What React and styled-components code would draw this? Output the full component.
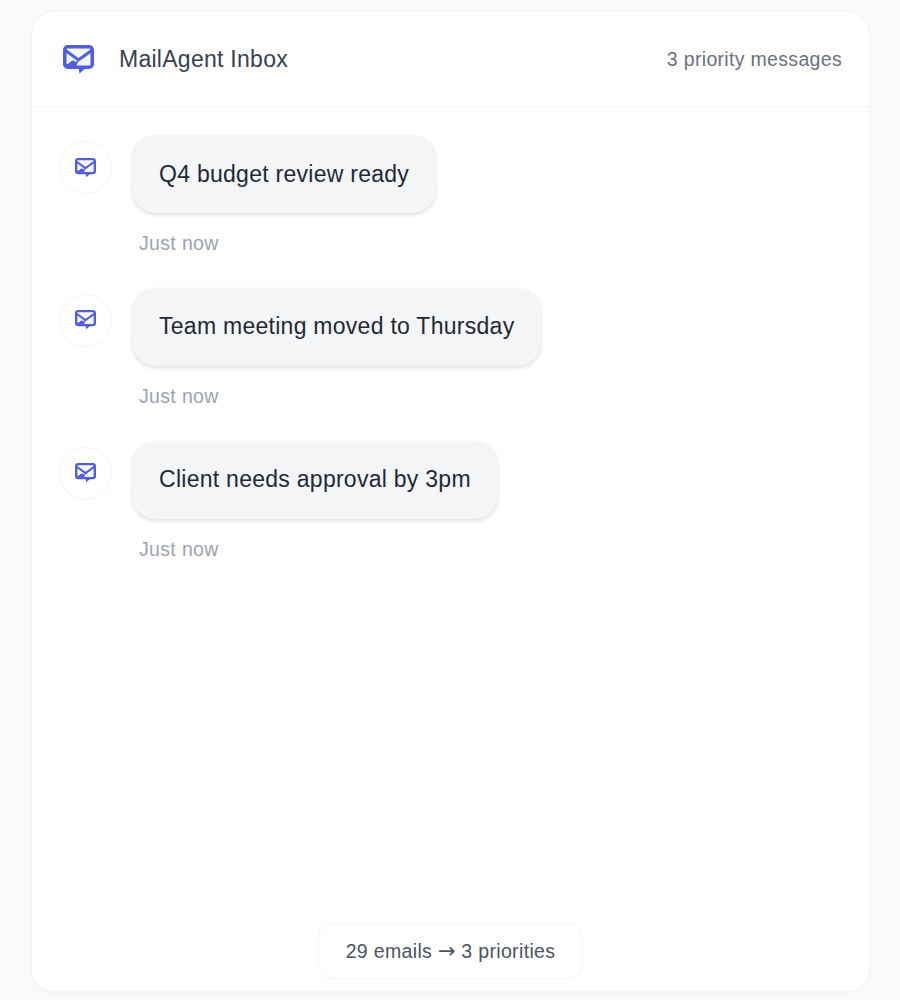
import React from 'react';
import styled, { createGlobalStyle } from 'styled-components';

const GlobalStyle = createGlobalStyle`
  html, body {
    margin: 0;
    padding: 0;
    background: #f9fafb;
    font-family: "Liberation Sans", Arial, sans-serif;
  }
`;

const Page = styled.div`
  box-sizing: border-box;
  height: 1000px;
  padding: 11px 30px 8px 31px;
`;

const Card = styled.div`
  box-sizing: border-box;
  height: 100%;
  display: flex;
  flex-direction: column;
  background: #fff;
  border: 1px solid #f3f4f6;
  border-radius: 22px;
  box-shadow: 0 1px 3px rgba(0, 0, 0, 0.03);
`;

const Header = styled.div`
  box-sizing: border-box;
  height: 95px;
  flex: none;
  display: flex;
  align-items: center;
  justify-content: space-between;
  padding: 0 27px 0 31px;
  border-bottom: 1px solid #f3f4f6;
`;

const Brand = styled.div`
  display: flex;
  align-items: center;
  gap: 25px;
`;

const Title = styled.div`
  font-size: 23px;
  letter-spacing: 0.27px;
  color: #374151;
`;

const Count = styled.div`
  font-size: 19.5px;
  letter-spacing: 0.32px;
  color: #6b7280;
`;

const Feed = styled.div`
  flex: 1;
  display: flex;
  flex-direction: column;
  gap: 33.75px;
  padding: 28px 27px 0;
`;

const Row = styled.div`
  display: flex;
  align-items: flex-start;
  gap: 20px;
`;

const Avatar = styled.div`
  box-sizing: border-box;
  width: 53px;
  height: 53px;
  margin-top: 6px;
  flex: none;
  display: flex;
  align-items: center;
  justify-content: center;
  background: #fff;
  border: 1px solid #f3f4f6;
  border-radius: 50%;
`;

const Message = styled.div`
  display: flex;
  flex-direction: column;
  align-items: flex-start;
`;

const Bubble = styled.div`
  height: 78px;
  display: flex;
  align-items: center;
  padding: 0 27px;
  background: #f4f5f7;
  border-radius: 24px;
  box-shadow: 0 2px 4px rgba(0, 0, 0, 0.13);
  font-size: 23px;
  letter-spacing: 0.27px;
  color: #1f2937;
`;

const Time = styled.div`
  margin: 19px 0 0 7px;
  line-height: 22px;
  font-size: 19.5px;
  letter-spacing: 0.34px;
  color: #9ca3af;
`;

const Footer = styled.div`
  flex: none;
  display: flex;
  justify-content: center;
  padding-bottom: 12px;
`;

const Summary = styled.div`
  box-sizing: border-box;
  height: 56px;
  display: flex;
  align-items: center;
  padding: 0 27px;
  background: #fff;
  border: 1px solid #f3f4f6;
  border-radius: 14px;
  font-size: 19.5px;
  letter-spacing: 0.34px;
  white-space: pre;
  color: #4b5563;
`;

const Arrow = styled.span`
  font-family: "DejaVu Sans", sans-serif;
  font-size: 21px;
  letter-spacing: 0;
  color: #4b5563;
`;

const MailIcon = ({ size }) => (
  <svg width={size} height={(size * 29) / 31} viewBox="0 0 31 29" fill="none">
    <path d="M14 22h10l-7.500 6.500L15.500 22z" fill="#4f5fe0" />
    <rect x="1.750" y="1.750" width="27.500" height="20.500" rx="3" fill="#f6f7fe" stroke="#4f5fe0" strokeWidth="3.500" />
    <path d="M2.500 5.500l13 9.500 13-9.500" stroke="#4f5fe0" strokeWidth="3" />
    <path d="M3 21.500V19c3 .5 5-3.500 7-3.500 1.500 0 2 1 3 1.500l3-2.500-3 7.500z" fill="#4f5fe0" />
  </svg>
);

const items = ['Q4 budget review ready', 'Team meeting moved to Thursday', 'Client needs approval by 3pm'];

const App = () => (
  <>
    <GlobalStyle />
    <Page>
      <Card>
        <Header>
          <Brand>
            <MailIcon size={31} />
            <Title>MailAgent Inbox</Title>
          </Brand>
          <Count>3 priority messages</Count>
        </Header>
        <Feed>
          {items.map((text) => (
            <Row key={text}>
              <Avatar>
                <MailIcon size={21} />
              </Avatar>
              <Message>
                <Bubble>{text}</Bubble>
                <Time>Just now</Time>
              </Message>
            </Row>
          ))}
        </Feed>
        <Footer>
          <Summary>
            29 emails <Arrow>→</Arrow> 3 priorities
          </Summary>
        </Footer>
      </Card>
    </Page>
  </>
);

export default App;
